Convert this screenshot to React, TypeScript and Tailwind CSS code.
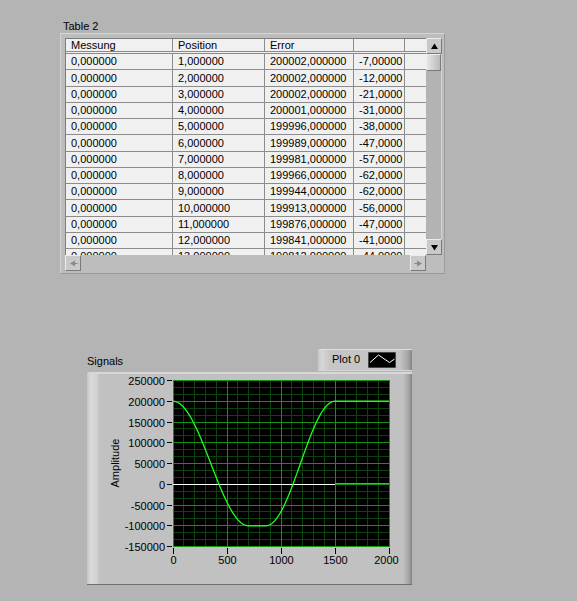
import React from 'react';

const headers = ['Messung', 'Position', 'Error', '', ''];

const rows: string[][] = [
  ['0,000000', '1,000000', '200002,000000', '-7,00000'],
  ['0,000000', '2,000000', '200002,000000', '-12,0000'],
  ['0,000000', '3,000000', '200002,000000', '-21,0000'],
  ['0,000000', '4,000000', '200001,000000', '-31,0000'],
  ['0,000000', '5,000000', '199996,000000', '-38,0000'],
  ['0,000000', '6,000000', '199989,000000', '-47,0000'],
  ['0,000000', '7,000000', '199981,000000', '-57,0000'],
  ['0,000000', '8,000000', '199966,000000', '-62,0000'],
  ['0,000000', '9,000000', '199944,000000', '-62,0000'],
  ['0,000000', '10,000000', '199913,000000', '-56,0000'],
  ['0,000000', '11,000000', '199876,000000', '-47,0000'],
  ['0,000000', '12,000000', '199841,000000', '-41,0000'],
  ['0,000000', '13,000000', '199812,000000', '-44,0000'],
];

const colWidths = ['w-[107px]', 'w-[92px]', 'w-[89px]', 'w-[51px]', 'w-[22px]'];

const FONT = 'Liberation Sans, Arial, sans-serif';

// raised LabVIEW style button
function ScrollButton({ dir, disabled }: { dir: 'up' | 'down' | 'left' | 'right'; disabled?: boolean }) {
  const fill = disabled ? '#8a8a8a' : '#000';
  return (
    <div className="w-[16px] h-[16px] shrink-0 flex items-center justify-center bg-[#c9c9c9] border border-t-[#ececec] border-l-[#ececec] border-r-[#7a7a7a] border-b-[#7a7a7a]">
      <svg width="9" height="9" viewBox="0 0 9 9">
        {dir === 'up' && <polygon points="4.5,1.5 8,7 1,7" fill={fill} />}
        {dir === 'down' && <polygon points="1,2 8,2 4.5,7.5" fill={fill} />}
        {dir === 'left' && (
          <>
            <polygon points="1,4.5 6,1.5 6,7.5" fill={fill} />
            <rect x="6" y="4" width="2.5" height="1" fill={fill} />
          </>
        )}
        {dir === 'right' && (
          <>
            <polygon points="8,4.5 3,1.5 3,7.5" fill={fill} />
            <rect x="0.5" y="4" width="2.5" height="1" fill={fill} />
          </>
        )}
      </svg>
    </div>
  );
}

function TableControl() {
  return (
    <div className="ml-[60px] pt-[19px]">
      <div className="h-[14px] leading-[14px] pl-[3px]">Table 2</div>
      <div className="w-[385px] h-[241px] bg-[#bdbdbd] border border-t-[#d6d6d6] border-l-[#d2d2d2] border-r-[#9c9c9c] border-b-[#9a9a9a] pt-[4px] pl-[4px] flex flex-col">
        <div className="flex">
          {/* Cells */}
          <div className="w-[361px] h-[217px] overflow-hidden bg-[#f0f0f0] border-l border-t border-[#7c7c7c]">
            <div className="flex h-[15px] border-b-[3px] border-double border-[#8a8a8a]">
              {headers.map((h, i) => (
                <div
                  key={i}
                  className={`${colWidths[i]} shrink-0 border-r border-[#8c8c8c] pl-[5px] flex items-center whitespace-nowrap overflow-hidden`}
                >
                  {h}
                </div>
              ))}
            </div>
            {rows.map((r, ri) => (
              <div key={ri} className="flex h-[16.25px] border-b border-[#8c8c8c]">
                {[...r, ''].map((c, ci) => (
                  <div
                    key={ci}
                    className={`${colWidths[ci]} shrink-0 border-r border-[#8c8c8c] pl-[5px] flex items-center whitespace-nowrap overflow-hidden`}
                  >
                    {c}
                  </div>
                ))}
              </div>
            ))}
          </div>

          {/* Vertical scrollbar */}
          <div className="w-[16px] h-[217px] flex flex-col bg-[#b3b3b3] border-r border-[#d0d0d0]">
            <ScrollButton dir="up" />
            <div className="h-[17px] shrink-0 bg-[linear-gradient(to_right,#e6e6e6,#d4d4d4_40%,#b9b9b9)] border border-t-[#efefef] border-l-[#efefef] border-r-[#7a7a7a] border-b-[#7a7a7a]" />
            <div className="flex-1" />
            <ScrollButton dir="down" />
          </div>
        </div>

        {/* Horizontal scrollbar */}
        <div className="w-[361px] h-[16px] flex">
          <ScrollButton dir="left" disabled />
          <div className="flex-1" />
          <ScrollButton dir="right" disabled />
        </div>
      </div>
    </div>
  );
}

// plot geometry, local to graph frame
const PL = 86;
const PW = 216;
const PT = 8;
const PH = 167;
const px = (x: number) => PL + (x * PW) / 2000;
const py = (v: number) => 8.5 + ((250000 - v) * 166) / 400000;

function signal(x: number) {
  if (x <= 700) return 50000 + 150000 * Math.cos((Math.PI * x) / 700);
  if (x < 860) return -100000;
  if (x <= 1500) return 50000 - 150000 * Math.cos((Math.PI * (x - 860)) / 640);
  return 200000;
}

function Chart() {
  const vLines = Array.from({ length: 21 }, (_, i) => ({ x: Math.floor(px(i * 100)) + 0.5, major: i % 5 === 0 }));
  const hLines = Array.from({ length: 25 }, (_, j) => ({
    y: Math.floor(py(250000 - (j * 50000) / 3)) + 0.5,
    major: j % 3 === 0,
  }));
  const yTicks = [250000, 200000, 150000, 100000, 50000, 0, -50000, -100000, -150000];
  const xTicks = [0, 500, 1000, 1500, 2000];

  const pts: string[] = [];
  for (let x = 0; x <= 2000; x += 5) pts.push(`${px(x).toFixed(2)},${py(signal(x)).toFixed(2)}`);

  const zeroY = Math.floor(py(0)) + 0.5;

  return (
    <svg width="325" height="211" viewBox="0 0 325 211" fontFamily={FONT} fontSize="11" className="block -mt-[2px]">
      <rect x={PL} y={PT} width={PW} height={PH} fill="#000" />
      {hLines.filter(l => !l.major).map((l, i) => (
        <line key={'hm' + i} x1={PL} x2={PL + PW} y1={l.y} y2={l.y} stroke="#0a440a" />
      ))}
      {vLines.filter(l => !l.major).map((l, i) => (
        <line key={'vm' + i} x1={l.x} x2={l.x} y1={PT} y2={PT + PH} stroke="#0a440a" />
      ))}
      {hLines.filter(l => l.major).map((l, i) => (
        <line key={'hM' + i} x1={PL} x2={PL + PW} y1={l.y} y2={l.y} stroke="#129412" />
      ))}
      {vLines.filter(l => l.major).map((l, i) => (
        <line key={'vM' + i} x1={l.x} x2={l.x} y1={PT} y2={PT + PH} stroke="#129412" />
      ))}

      <line x1={PL} x2={px(1500)} y1={zeroY} y2={zeroY} stroke="#fff" shapeRendering="crispEdges" />
      <line x1={px(1500)} x2={PL + PW} y1={zeroY - 1} y2={zeroY - 1} stroke="#ff5a5a" shapeRendering="crispEdges" />
      <polyline points={pts.join(' ')} fill="none" stroke="#1cff1c" strokeWidth="1.3" />

      {yTicks.map(v => {
        const y = Math.floor(py(v)) + 0.5;
        return (
          <g key={v}>
            <line x1={80} x2={85} y1={y} y2={y} stroke="#000" />
            <text x={78} y={y + 4} textAnchor="end" fill="#000">
              {v}
            </text>
          </g>
        );
      })}
      {xTicks.map(v => {
        const x = Math.floor(px(v)) + 0.5;
        return (
          <g key={v}>
            <line x1={x} x2={x} y1={176} y2={182} stroke="#000" />
            <text x={v === 2000 ? x - 3 : x} y={192} textAnchor="middle" fill="#000">
              {v}
            </text>
          </g>
        );
      })}
      <text x={32} y={91} textAnchor="middle" fill="#000" transform="rotate(-90 32 91)">
        Amplitude
      </text>
    </svg>
  );
}

function GraphControl() {
  return (
    <div className="ml-[87px] mt-[75px] w-[325px]">
      <div className="flex justify-between items-start h-[23px]">
        <div className="mt-[6px] leading-[13px]">Signals</div>
        <div className="w-[94px] h-[22px] flex items-center pl-[14px] bg-[linear-gradient(to_right,#c8c8c8,#d6d6d6_4px,#c6c6c6_12px,#c4c4c4_calc(100%-12px),#a6a6a6_calc(100%-4px),#858585)] border-t border-t-[#dedede] border-b border-b-[#d6d6d6] rounded-tl-[2px]">
          <span className="leading-[13px] mt-[-1px]">Plot 0</span>
          <svg width="28" height="16" viewBox="0 0 28 16" className="ml-[8px] shrink-0">
            <rect x="0" y="0" width="28" height="16" fill="#000" stroke="#8a8a8a" strokeWidth="1" />
            <polyline points="2,10.5 10.5,3 21.5,10.5 26.5,7" fill="none" stroke="#fff" strokeWidth="1" />
          </svg>
        </div>
      </div>
      <div className="w-[325px] h-[213px] bg-[linear-gradient(to_right,#c6c6c6,#dadada_4px,#cecece_11px,#c1c1c1_12px,#c1c1c1_calc(100%-9px),#a4a4a4_calc(100%-3px),#808080)] border-t-2 border-t-[#d8d8d8] border-b border-b-[#6e6e6e] rounded-tl-[3px]">
        <Chart />
      </div>
    </div>
  );
}

export default function App() {
  return (
    <div className="w-[577px] h-[601px] overflow-hidden bg-[#b4b4b4] text-black text-[11px] font-['Liberation_Sans',Arial,sans-serif]">
      <TableControl />
      <GraphControl />
    </div>
  );
}
